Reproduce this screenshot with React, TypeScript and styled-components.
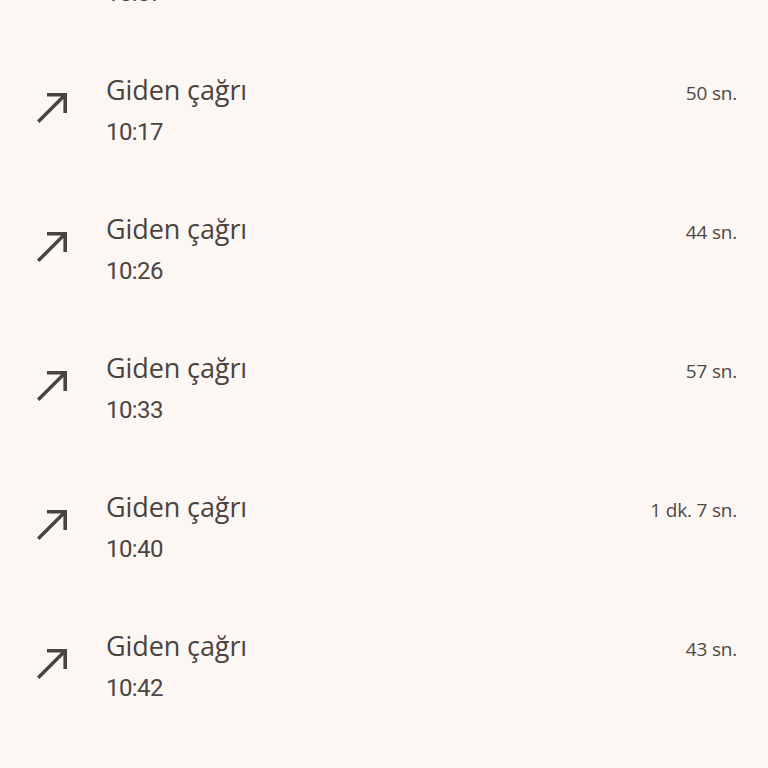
import React from "react";
import styled, { createGlobalStyle } from "styled-components";

const GlobalStyle = createGlobalStyle`
  html, body {
    margin: 0;
    padding: 0;
    background: #fcf7f3;
    overflow: hidden;
  }
  body {
    font-family: "Open Sans", "Roboto", sans-serif;
    color: #4a4340;
  }
`;

const List = styled.div`
  width: 768px;
  height: 768px;
  overflow: hidden;
`;

const Rows = styled.div`
  display: flex;
  flex-direction: column;
  margin-top: -98px;
`;

const Row = styled.div`
  display: flex;
  align-items: center;
  height: 139px;
  padding: 0 31px 0 29px;
  box-sizing: border-box;
`;

const IconBox = styled.div`
  width: 48px;
  height: 48px;
  flex: 0 0 48px;
  margin-top: -7px;
  color: #4a4340;
`;

const Texts = styled.div`
  flex: 1;
  display: flex;
  flex-direction: column;
  margin-left: 29px;
`;

const Title = styled.div`
  font-family: "Open Sans", sans-serif;
  font-size: 27px;
  line-height: 41px;
  letter-spacing: -0.1px;
`;

const Time = styled.div`
  font-family: "Roboto", sans-serif;
  font-size: 24px;
  line-height: 41px;
  padding-top: 2px;
  letter-spacing: -0.6px;
  color: #4c4542;
`;

const Duration = styled.div`
  align-self: flex-start;
  margin-top: 33px;
  font-family: "Open Sans", sans-serif;
  font-size: 19px;
  line-height: 38px;
  letter-spacing: -0.2px;
  color: #4e4845;
`;

const CallMade = () => (
  <svg width="48" height="48" viewBox="0 0 24 24">
    <path
      fill="currentColor"
      d="M9 5v1.8h7L4 18.8 5.2 20 17.2 8V15H19V5z"
    />
  </svg>
);

type Call = { time: string; duration: string };

const calls: Call[] = [
  { time: "10:07", duration: "" },
  { time: "10:17", duration: "50 sn." },
  { time: "10:26", duration: "44 sn." },
  { time: "10:33", duration: "57 sn." },
  { time: "10:40", duration: "1 dk. 7 sn." },
  { time: "10:42", duration: "43 sn." },
];

export default function App() {
  return (
    <List>
      <GlobalStyle />
      <Rows>
        {calls.map((c, i) => (
          <Row key={i}>
            <IconBox>
              <CallMade />
            </IconBox>
            <Texts>
              <Title>Giden çağrı</Title>
              <Time>{c.time}</Time>
            </Texts>
            <Duration>{c.duration}</Duration>
          </Row>
        ))}
      </Rows>
    </List>
  );
}
